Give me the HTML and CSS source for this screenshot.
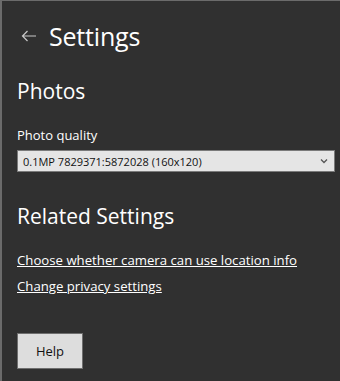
FILE: index.html
```html
<!DOCTYPE html>
<html lang="en">
<head>
    <meta charset="UTF-8">
    <title>Settings</title>
    <link rel="stylesheet" href="styles.css">
</head>
<body>
    <div class="page">
        <div class="header">
            <svg class="back" width="16" height="12" viewBox="0 0 16 12">
                <path d="M15 6H1.5M6.5 1L1.5 6l5 5" fill="none" stroke="#c8c8c8" stroke-width="1.2"/>
            </svg>
            <h1>Settings</h1>
        </div>

        <div class="section photos">
            <h2>Photos</h2>
            <label class="field-label" for="quality">Photo quality</label>
            <div class="select" id="quality">
                <span>0.1MP 7829371:5872028 (160x120)</span>
                <svg width="8" height="6" viewBox="0 0 8 6"><path d="M1 1.5l3 3 3-3" fill="none" stroke="#555" stroke-width="1.3"/></svg>
            </div>
        </div>

        <div class="section related">
            <h2>Related Settings</h2>
            <a class="link" href="#">Choose whether camera can use location info</a>
            <a class="link" href="#">Change privacy settings</a>
        </div>

        <button class="help-btn">Help</button>
    </div>
</body>
</html>
```

FILE: styles.css
```css
html, body {
    margin: 0;
    padding: 0;
    height: 100%;
}

body {
    background-color: #303030;
    font-family: "Open Sans", "Noto Sans", sans-serif;
    color: white;
}

.page {
    height: 100%;
    box-sizing: border-box;
    border-left: 2px solid #6b6b6b;
    border-top: 1px solid #6b6b6b;
    padding: 0 0 0 15px;
}

.header {
    display: flex;
    align-items: center;
    height: 70px;
}

.back {
    margin-left: 4px;
    margin-right: 12px;
}

.header h1 {
    margin: 0;
    font-size: 25px;
    font-weight: normal;
    letter-spacing: -0.2px;
}

.section h2 {
    margin: 0;
    font-size: 21px;
    font-weight: normal;
    line-height: 30px;
}

.photos {
    margin-top: 5px;
}

.field-label {
    display: block;
    margin-top: 20px;
    font-size: 13px;
    line-height: 18px;
}

.select {
    display: flex;
    align-items: center;
    justify-content: space-between;
    margin-top: 6px;
    margin-right: 5px;
    height: 18px;
    padding: 1px 6px 1px 5px;
    background-color: #e5e5e5;
    border: 1px solid #7a7a7a;
    color: #111;
    font-size: 11px;
}

.related {
    margin-top: 29px;
}

.link {
    display: block;
    color: white;
    font-size: 13.2px;
    line-height: 18px;
    margin-top: 8px;
}

.related h2 + .link {
    margin-top: 20px;
}

.help-btn {
    margin-top: 38px;
    width: 66px;
    height: 36px;
    background-color: #dddddd;
    border: 1px solid #6e6e6e;
    color: #111;
    font-family: "Open Sans", "Noto Sans", sans-serif;
    font-size: 13px;
    cursor: pointer;
}
```
